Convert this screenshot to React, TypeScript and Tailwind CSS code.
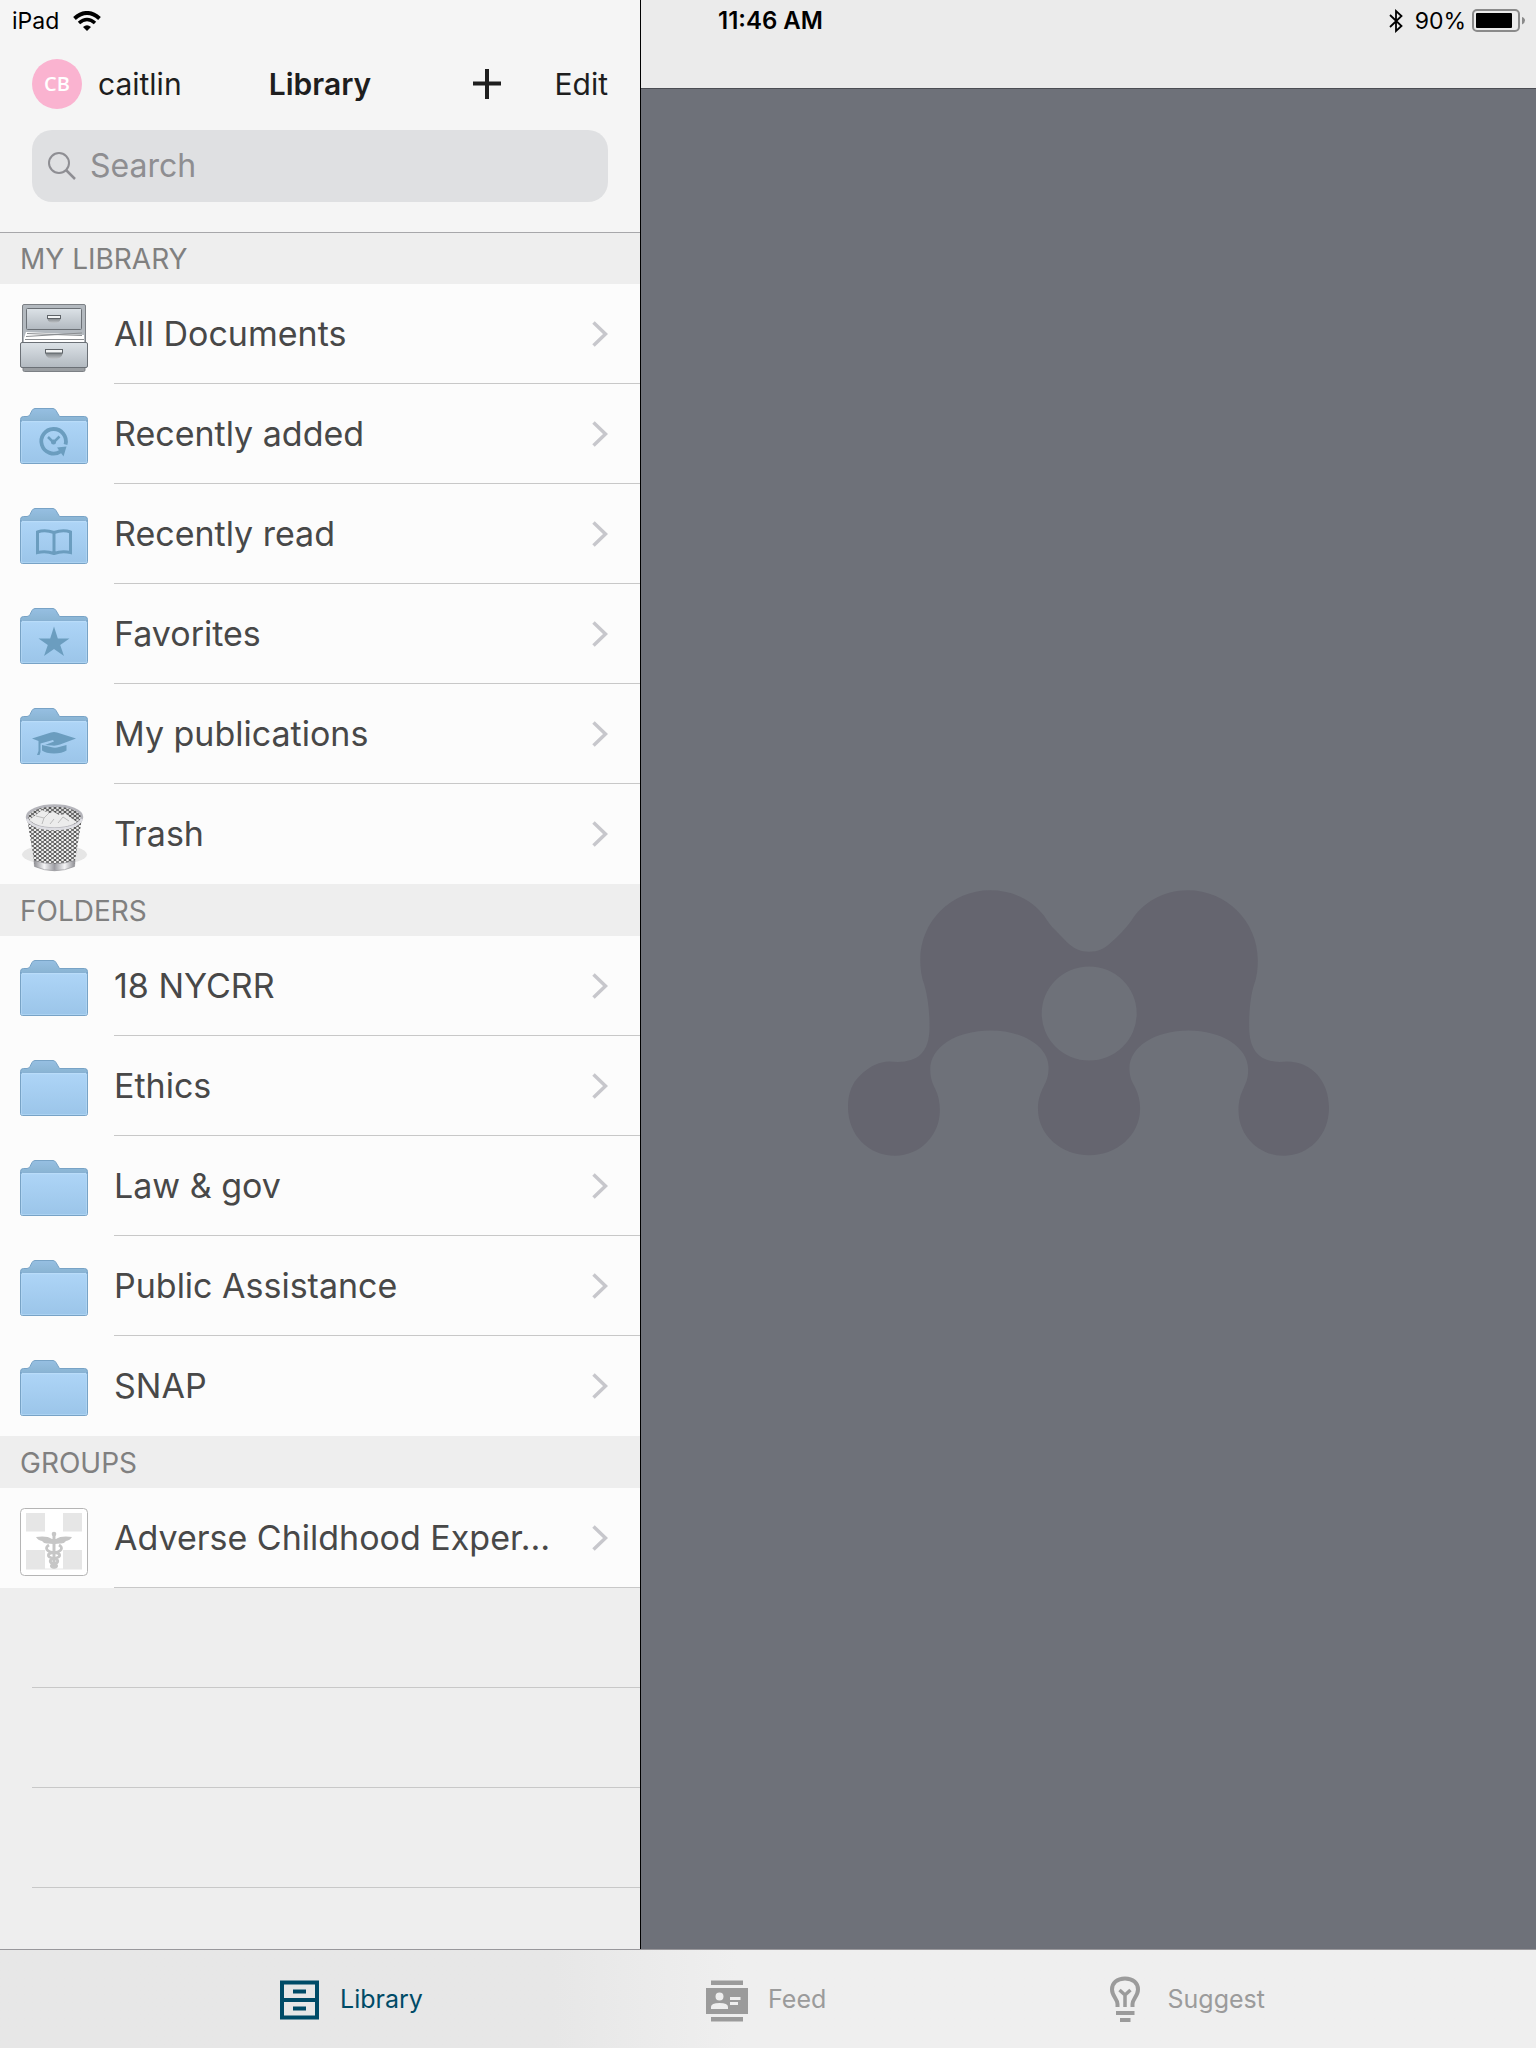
import { useState } from 'react'
import type { ReactNode } from 'react'

type TabId = 'library' | 'feed' | 'suggest'

function FolderIcon({ children }: { children?: ReactNode }) {
  return (
    <svg viewBox="0 0 68 68" className="size-17" aria-hidden="true">
      <path
        d="M.5 20V15.5Q.5 12.5 3.5 12.5H7Q9 12.5 10 10.5L12 6.500Q13.200 4.500 15 4.500H33Q34.800 4.500 36 6.500L39.500 12.500H64.500Q67.500 12.500 67.500 15.500V20Z"
        fill="url(#folderBack)"
        stroke="#78a3c6"
      />
      <rect x=".5" y="16.500" width="67" height="43" rx="2" fill="url(#folderFront)" stroke="#78a3c6" />
      <path d="M2 17.500H66" stroke="#b9dcf9" strokeWidth="1.500" />
      <path d="M1.500 18V58.500H66.500V18" fill="none" stroke="#b4d7f3" opacity=".7" />
      {children}
    </svg>
  )
}

function CabinetIcon() {
  return (
    <svg viewBox="0 0 68 68" className="size-17" aria-hidden="true">
      <rect x="2.500" y=".5" width="63" height="50" rx="1.500" fill="#b3b9bf" stroke="#7c8085" />
      <rect x="6.500" y="4.500" width="55" height="21" rx="1" fill="url(#drawer)" stroke="#6b7076" />
      <path d="M4 38V34L6 28L64 31V38Z" fill="#fff" />
      <path d="M6 32.500L62 29M7 29.500L62 31.500M5 35.500H64" stroke="#8a8d90" />
      <path d="M27.500 13.500H40.500V15Q40 19 34 19Q28 19 27.500 15Z" fill="url(#handle)" />
      <rect x="27.500" y="11.500" width="13" height="3" fill="#f2f4f5" stroke="#5f6469" />
      <rect x="3" y="62" width="62" height="5.500" rx="1.500" fill="#9a9ea2" stroke="#7c8085" />
      <rect x=".5" y="38.500" width="67" height="25" rx="1.500" fill="url(#drawer)" stroke="#6b7076" />
      <path d="M25.500 48.500H42.500V50Q41.500 55 34 55Q26.500 55 25.500 50Z" fill="url(#handle)" />
      <rect x="25.500" y="45.500" width="17" height="3.500" fill="#f2f4f5" stroke="#5f6469" />
    </svg>
  )
}

function TrashIcon() {
  return (
    <svg viewBox="0 0 68 68" className="size-17" aria-hidden="true">
      <ellipse cx="34.500" cy="50.500" rx="32.500" ry="10" fill="#e6e6e6" />
      <path d="M7.500 17L14.500 60H54.500L61.500 17Z" fill="#efefef" />
      <path d="M7.500 17L14.500 60H54.500L61.500 17Z" fill="url(#mesh)" />
      <path d="M14 56.500Q34 63 55 56.500L54.500 62.500Q34.500 71 14.500 62.500Z" fill="url(#metal)" stroke="#8b8b90" strokeWidth=".6" />
      <ellipse cx="34.500" cy="13" rx="27.500" ry="11.500" fill="#dcdcdc" />
      <ellipse cx="34.500" cy="13" rx="27.500" ry="11.500" fill="url(#mesh)" />
      <path d="M9 16L17 10L22 6L29 9L34 8L39 11L46 10L51 14L57 18Q48 24 34 24Q18 24 9 16Z" fill="#ececec" />
      <path d="M16 12L24 14L29 9M24 14L22 20M38 19L43 13L49 17M30 20L34 15" fill="none" stroke="#bcbcbc" />
      <ellipse cx="34.500" cy="13" rx="27.500" ry="11.500" fill="none" stroke="#b5b5bb" strokeWidth="2.500" />
      <path d="M7 15Q12 25 34.500 25Q57 25 62 15" fill="none" stroke="#dedee3" strokeWidth="2.500" />
    </svg>
  )
}

function GroupIcon() {
  return (
    <svg viewBox="0 0 68 68" className="size-17" aria-hidden="true">
      <rect x=".5" y=".5" width="67" height="67" rx="4" fill="#fff" stroke="#b5b5b5" />
      <path d="M6 5H25V23.500H6ZM43 5H62V23.500H43ZM6 42H25V61.500H6ZM43 42H62V61.500H43Z" fill="#e6e6e6" />
      <path d="M25 61H43" stroke="#e6e6e6" />
      <path
        d="M32 31Q27 27.500 16 29Q18 32.500 22 33Q24 36 28 35.500L33 36V31ZM36 31Q41 27.500 52 29Q50 32.500 46 33Q44 36 40 35.500L35 36V31Z"
        fill="#c6c6c6"
      />
      <circle cx="34" cy="26" r="2.300" fill="#c6c6c6" />
      <path d="M34 27V59" stroke="#c6c6c6" strokeWidth="3" />
      <path
        d="M29 37C24 40 27 44 34 44.500C41 45 42 49 34 50.500C28 52 30 55 34 56C38 57 37 59 34 59.500M39 37C44 40 41 44 34 44.500C27 45 26 49 34 50.500C40 52 38 55 34 56C30 57 31 59 34 59.500"
        fill="none"
        stroke="#c6c6c6"
        strokeWidth="2.800"
      />
    </svg>
  )
}

const recentlyAdded = (
  <FolderIcon>
    <path d="M45.500 40.500A12.300 12.300 0 1 0 40.500 47.500" fill="none" stroke="#6b9dbf" strokeWidth="3.800" />
    <path d="M37 43.500L46.500 42.500L43.500 52.500Z" fill="#6b9dbf" />
    <path d="M28 33L33.500 38.500L39.500 32.500" fill="none" stroke="#6b9dbf" strokeWidth="2.500" />
    <circle cx="33.500" cy="38" r="2.500" fill="#6b9dbf" />
  </FolderIcon>
)

const recentlyRead = (
  <FolderIcon>
    <path
      d="M17.500 28Q25 25.500 34 28.500Q43 25.500 50.500 28V48.500Q42 46.500 34 49.500Q26 46.500 17.500 48.500ZM34 28.500V50.500"
      fill="none"
      stroke="#6b9dbf"
      strokeWidth="3"
    />
  </FolderIcon>
)

const favorites = (
  <FolderIcon>
    <path d="M34 22.500L37.800 34.500H49.500L40.200 41L44 52L34 45L24 52L27.800 41L18.500 34.500H30.200Z" fill="#6b9dbf" />
  </FolderIcon>
)

const publications = (
  <FolderIcon>
    <path d="M12 34.500L31 28.500Q34 27.500 37 28.500L56 34.500L40 40.500Q36 42 32 41.500L25 41L34 37.500L33 36L20.500 39.500V48L19.500 51L17 51L18.500 47V37Z" fill="#6b9dbf" />
    <path d="M22 41L33 43.500Q36 44 39 43L46.500 41V46.500Q42 49.500 34 49.500Q26 49.500 22 46.500Z" fill="#6b9dbf" />
  </FolderIcon>
)

const sections: { title: string; rows: { name: string; icon: ReactNode }[] }[] = [
  {
    title: 'MY LIBRARY',
    rows: [
      { name: 'All Documents', icon: <CabinetIcon /> },
      { name: 'Recently added', icon: recentlyAdded },
      { name: 'Recently read', icon: recentlyRead },
      { name: 'Favorites', icon: favorites },
      { name: 'My publications', icon: publications },
      { name: 'Trash', icon: <TrashIcon /> },
    ],
  },
  {
    title: 'FOLDERS',
    rows: [
      { name: '18 NYCRR', icon: <FolderIcon /> },
      { name: 'Ethics', icon: <FolderIcon /> },
      { name: 'Law & gov', icon: <FolderIcon /> },
      { name: 'Public Assistance', icon: <FolderIcon /> },
      { name: 'SNAP', icon: <FolderIcon /> },
    ],
  },
  {
    title: 'GROUPS',
    rows: [{ name: 'Adverse Childhood Exper…', icon: <GroupIcon /> }],
  },
]

const tabs: { id: TabId; label: string; icon: ReactNode }[] = [
  {
    id: 'library',
    label: 'Library',
    icon: (
      <svg viewBox="0 0 40 48" className="h-12 w-10" aria-hidden="true">
        <path d="M2 6.500H37V41.500H2ZM2 24H37" fill="none" stroke="currentColor" strokeWidth="4" />
        <path d="M13 15.500H26M13 32.500H26" stroke="currentColor" strokeWidth="4" />
      </svg>
    ),
  },
  {
    id: 'feed',
    label: 'Feed',
    icon: (
      <svg viewBox="0 0 42 48" className="h-12 w-[42px]" fill="currentColor" aria-hidden="true">
        <path d="M5 4.500H37V9H5ZM5 41H37V45.500H5Z" />
        <path
          fillRule="evenodd"
          d="M0 12H42V38H0ZM13.500 16.500A4 4 0 1 0 13.500 24.500A4 4 0 1 0 13.500 16.500ZM5 33H22V31Q22 27 13.500 27Q5 27 5 31ZM24 21V24H34.500V21ZM24 26V29H32V26Z"
        />
      </svg>
    ),
  },
  {
    id: 'suggest',
    label: 'Suggest',
    icon: (
      <svg viewBox="0 0 30 48" className="h-12 w-[30px]" fill="none" stroke="currentColor" aria-hidden="true">
        <path
          d="M7.500 31V28C7.500 23 2 20 2 13.500C2 7 7 2.500 15 2.500C23 2.500 28 7 28 13.500C28 20 22.500 23 22.500 28V31"
          strokeWidth="4"
        />
        <path d="M15 31V18.500M9.500 14L15 19L20.500 14" strokeWidth="3.500" />
        <path d="M6 37H24.500M10 44H20.500" strokeWidth="4" />
      </svg>
    ),
  },
]

// gradients and patterns shared by all list icons
function IconDefs() {
  return (
    <svg className="absolute size-0" aria-hidden="true">
      <defs>
        <linearGradient id="folderBack" x1="0" y1="0" x2="0" y2="1">
          <stop offset="0" stopColor="#96bfe2" />
          <stop offset="1" stopColor="#86b1cf" />
        </linearGradient>
        <linearGradient id="folderFront" x1="0" y1="0" x2="0" y2="1">
          <stop offset="0" stopColor="#aed5f7" />
          <stop offset="1" stopColor="#9bc5e9" />
        </linearGradient>
        <linearGradient id="drawer" x1="0" y1="0" x2="0" y2="1">
          <stop offset="0" stopColor="#dce2e7" />
          <stop offset="1" stopColor="#b2b9c0" />
        </linearGradient>
        <linearGradient id="handle" x1="0" y1="0" x2="0" y2="1">
          <stop offset="0" stopColor="#73787c" />
          <stop offset="1" stopColor="#c2c6ca" />
        </linearGradient>
        <linearGradient id="metal">
          <stop offset="0" stopColor="#8d8d92" />
          <stop offset=".25" stopColor="#f4f4f6" />
          <stop offset=".5" stopColor="#9c9ca2" />
          <stop offset=".75" stopColor="#f4f4f6" />
          <stop offset="1" stopColor="#8d8d92" />
        </linearGradient>
        <pattern id="mesh" width="5" height="4" patternUnits="userSpaceOnUse">
          <path d="M0 0L5 4M5 0L0 4" stroke="#4a4a4a" />
        </pattern>
      </defs>
    </svg>
  )
}

function Logo() {
  return (
    <svg viewBox="80 90 1398 797" preserveAspectRatio="none" className="h-[266px] w-[481px]" role="img" aria-label="Mendeley">
      <path
        fill="#65656f"
        fillRule="evenodd"
        d="M290 300C290 185 380 91 493 91C560 91 615 120 650 167C660 184 670 198 682 210L716 246C738 268 755 275 781 275C807 275 824 268 846 246C865 228 885 208 903 183C934 130 995 91 1068 91C1180 91 1271 185 1271 300C1271 325 1269 350 1260 375C1250 405 1245 460 1246 500C1246 575 1280 605 1335 605L1355 604C1430 604 1478 665 1478 742C1478 825 1420 886 1345 886C1272 886 1215 825 1215 750C1215 720 1221 703 1230 683C1240 662 1243 650 1243 628C1243 560 1165 511 1070 511C972 511 898 560 898 625C898 650 905 665 914 680C924 700 929 722 929 745C929 825 862 885 781 885C700 885 632 825 632 745C632 718 639 698 648 680C657 663 663 648 663 622C663 560 590 511 495 511C395 511 319 560 319 628C319 652 325 668 333 685C342 703 347 725 347 750C347 825 290 886 217 886C140 886 80 825 80 740C80 700 92 668 115 646C145 616 170 605 200 604L225 605C280 605 317 580 317 500C317 455 312 410 302 375C293 350 290 325 290 300ZM781 319A138 141 0 1 0 781 601A138 141 0 1 0 781 319Z"
      />
    </svg>
  )
}

export default function App() {
  const [tab, setTab] = useState<TabId>('library')
  const [query, setQuery] = useState('')

  return (
    <div className="flex min-h-screen flex-col bg-[#eeeeee] font-['Inter','Liberation_Sans',sans-serif] text-black">
      <IconDefs />

      <div className="flex flex-1">
        <aside className="flex w-5/12 shrink-0 flex-col">
          <header className="z-10 -mb-px border-b border-[#a7a7aa] bg-[#f5f5f5] pb-[30px]">
            <div className="flex h-[42px] items-center gap-3.5 px-3">
              <span className="text-[23px]">iPad</span>
              <svg viewBox="0 0 28 20" className="h-5 w-7" fill="none" stroke="#000" aria-label="Wi-Fi">
                <path d="M1.500 7.500Q14-3.500 26.500 7.500" strokeWidth="4" />
                <path d="M6 12Q14 5 22 12" strokeWidth="3.600" />
                <path d="M10 16Q14 12.500 18 16L14 20Z" fill="#000" stroke="none" />
              </svg>
            </div>

            <div className="mb-1 grid h-[84px] grid-cols-[1fr_auto_1fr] items-center px-8 text-[30px] text-[#1e1e1e]">
              <button type="button" className="flex items-center gap-4">
                <span className="flex size-[50px] items-center justify-center rounded-full bg-[#fab3d0] font-['Open_Sans',sans-serif] text-[20px] font-semibold text-white">
                  CB
                </span>
                caitlin
              </button>
              <h1 className="font-semibold">Library</h1>
              <div className="flex items-center justify-end gap-[54px]">
                <button type="button" aria-label="Add">
                  <svg viewBox="0 0 28 30" className="h-[30px] w-7" stroke="#1e1e1e" strokeWidth="4">
                    <path d="M0 14.500H28M14 0V30" />
                  </svg>
                </button>
                <button type="button">Edit</button>
              </div>
            </div>

            <label className="mx-8 flex h-[72px] items-center gap-3.5 rounded-[20px] bg-[#dfe0e2] px-4 pb-px">
              <svg viewBox="0 0 28 28" className="size-7 shrink-0" fill="none" stroke="#8e8e93" aria-hidden="true">
                <circle cx="11" cy="11" r="10" strokeWidth="2" />
                <path d="M18 18L27 27" strokeWidth="2.500" />
              </svg>
              <input
                type="text"
                value={query}
                onChange={(e) => setQuery(e.target.value)}
                placeholder="Search"
                aria-label="Search"
                className="w-full min-w-0 bg-transparent text-[32px] outline-none placeholder:text-[#8e8e91]"
              />
            </label>
          </header>

          <nav>
            {sections.map((section) => (
              <section key={section.title}>
                <h2 className="flex h-[52px] items-center bg-[#eeeeee] px-5 pt-px text-[28px] text-[#808080]">{section.title}</h2>
                <ul className="bg-[#fcfcfc]">
                  {section.rows.map((row, i) => (
                    <li key={row.name}>
                      <a href="#" className="flex h-[100px] items-stretch gap-[26px] pl-5">
                        <span className="shrink-0 pt-5">{row.icon}</span>
                        <span
                          className={`flex min-w-0 flex-1 items-center justify-between border-b pr-8 text-[34px] text-[#484848] ${
                            i === section.rows.length - 1 && section.title !== 'GROUPS' ? 'border-transparent' : 'border-[#c8c8c8]'
                          }`}
                        >
                          <span className="truncate">{row.name}</span>
                          <svg viewBox="0 0 16 26" className="h-[26px] w-4 shrink-0" fill="none" stroke="#c7c7cc" strokeWidth="3.500" aria-hidden="true">
                            <path d="M1.500 1.500L13.500 13L1.500 24.500" />
                          </svg>
                        </span>
                      </a>
                    </li>
                  ))}
                </ul>
              </section>
            ))}
          </nav>

          {/* blank rows below the list */}
          <div className="flex-1 pl-8">
            <div className="h-[100px] border-b border-[#c8c8c8]" />
            <div className="h-[100px] border-b border-[#c8c8c8]" />
            <div className="h-[100px] border-b border-[#c8c8c8]" />
          </div>
        </aside>

        <main className="flex flex-1 flex-col border-l border-black bg-[#6e7179]">
          <div className="h-[89px] border-b border-[#4b4d53] bg-[#ebebeb]">
            <div className="flex h-[42px] items-center justify-between pr-2.5 pl-[77px]">
              <span className="text-[24px] font-semibold">11:46 AM</span>
              <div className="flex items-center">
                <svg viewBox="0 0 14 24" className="mr-3 h-6 w-3.5" fill="none" stroke="#000" strokeWidth="1.800" aria-label="Bluetooth">
                  <path d="M1 6L12.500 17L7 22V2L12.500 7L1 18" />
                </svg>
                <span className="mr-1.5 text-[23px]">90%</span>
                <svg viewBox="0 0 54 24" className="h-6 w-[54px]" aria-label="Battery">
                  <rect x="1" y="1" width="46" height="21" rx="4" fill="none" stroke="#8a8a8a" strokeWidth="2" />
                  <rect x="4" y="4" width="36" height="15" rx="1" fill="#000" />
                  <path d="M50 8Q53 9 53 11.500Q53 14 50 15.500Z" fill="#8a8a8a" />
                </svg>
              </div>
            </div>
          </div>
          <div className="flex flex-1 items-center justify-center pt-2">
            <Logo />
          </div>
        </main>
      </div>

      <nav className="flex h-[99px] items-center justify-between border-t border-[#98979b] bg-linear-to-r from-[#e7e7e7] from-36% to-[#efefef] to-48% pt-0.5 pr-[271px] pl-[280px]">
        {tabs.map((t) => (
          <button
            key={t.id}
            type="button"
            onClick={() => setTab(t.id)}
            className={`flex items-center text-[25px] ${t.id === 'suggest' ? 'gap-7' : 'gap-5'} ${tab === t.id ? 'text-[#004b67]' : 'text-[#9b9b9b]'}`}
          >
            {t.icon}
            {t.label}
          </button>
        ))}
      </nav>
    </div>
  )
}
